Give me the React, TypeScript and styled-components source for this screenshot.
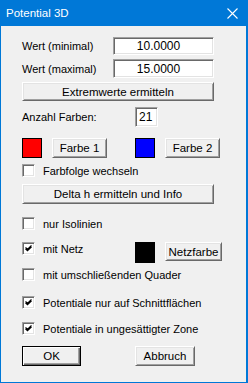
import React from 'react';
import styled, { createGlobalStyle } from 'styled-components';

const GlobalStyle = createGlobalStyle`
  html, body {
    margin: 0;
    padding: 0;
    background: #ffffff;
  }
  body {
    font-family: "Liberation Sans", Arial, sans-serif;
    font-size: 11px;
    color: #000;
  }
`;

const Window = styled.div`
  width: 248px;
  height: 383px;
  box-sizing: border-box;
  background: #f0f0f0;
  border-left: 1px solid #0078d7;
  border-right: 2px solid #0078d7;
  border-bottom: 1px solid #0078d7;
  display: flex;
  flex-direction: column;
`;

const TitleBar = styled.div`
  height: 26px;
  background: #0078d7;
  color: #fff;
  display: flex;
  align-items: center;
  justify-content: space-between;
  padding: 0 10px 0 6px;
  margin: 0 -2px 0 -1px;
  font-size: 11.5px;
`;

const Body = styled.div`
  display: flex;
  flex-direction: column;
  padding: 11px 0 0 21px;
`;

const Row = styled.div<{ $top?: number; $cols?: string; $h?: number }>`
  display: grid;
  grid-template-columns: ${(p) => p.$cols || '113px auto'};
  align-items: center;
  margin-top: ${(p) => p.$top || 0}px;
  height: ${(p) => (p.$h ? `${p.$h}px` : 'auto')};
`;

const Label = styled.span`
  white-space: nowrap;
`;

const Field = styled.div<{ $w: number; $h: number; $align?: string }>`
  box-sizing: border-box;
  width: ${(p) => p.$w}px;
  height: ${(p) => p.$h}px;
  background: #fff;
  border-style: solid;
  border-width: 1px;
  border-color: #a0a0a0 #fff #fff #a0a0a0;
  box-shadow: inset 1px 1px 0 #696969, inset -1px -1px 0 #e3e3e3;
  display: flex;
  align-items: center;
  justify-content: ${(p) => p.$align || 'center'};
  padding: ${(p) => (p.$align ? '0 0 0 3px' : '0 10px 0 0')};
  font-size: 12px;
`;

const Button = styled.div<{ $w: number; $h?: number; $default?: boolean }>`
  box-sizing: border-box;
  width: ${(p) => p.$w}px;
  height: ${(p) => p.$h || 19}px;
  background: #f0f0f0;
  border-style: solid;
  border-width: 1px;
  border-color: ${(p) => (p.$default ? '#000' : '#fff #696969 #696969 #fff')};
  box-shadow: ${(p) =>
    p.$default
      ? 'inset 1px 1px 0 #fff, inset -1px -1px 0 #696969, inset -2px -2px 0 #a0a0a0'
      : 'inset 1px 1px 0 #e3e3e3, inset -1px -1px 0 #a0a0a0'};
  display: flex;
  align-items: center;
  justify-content: center;
  font-size: 11.5px;
  white-space: nowrap;
`;

const Swatch = styled.div<{ $color: string; $h?: number }>`
  box-sizing: border-box;
  width: 20px;
  height: ${(p) => p.$h || 20}px;
  background: ${(p) => p.$color};
  border: 1px solid #000;
`;

const ColorGroup = styled.div`
  display: flex;
  align-items: flex-start;
  gap: 10px;
`;

const CheckRow = styled.div<{ $top: number }>`
  display: flex;
  align-items: center;
  gap: 8px;
  margin-top: ${(p) => p.$top}px;
  height: 13px;
`;

const Box = styled.div`
  box-sizing: border-box;
  width: 13px;
  height: 13px;
  background: #fff;
  border-style: solid;
  border-width: 1px;
  border-color: #a0a0a0 #fff #fff #a0a0a0;
  box-shadow: inset 1px 1px 0 #696969, inset -1px -1px 0 #e3e3e3;
  display: flex;
  align-items: center;
  justify-content: center;
`;

function Check(props: { checked?: boolean; label: string; top: number }) {
  return (
    <CheckRow $top={props.top}>
      <Box>
        {props.checked && (
          <svg width="9" height="9" viewBox="0 0 9 9">
            <path d="M1.5 3.5 L3.5 5.5 L7.5 1.5 M1.5 4.7 L3.5 6.7 L7.5 2.7" stroke="#000" strokeWidth="1.3" fill="none" />
          </svg>
        )}
      </Box>
      <Label>{props.label}</Label>
    </CheckRow>
  );
}

export default function App() {
  return (
    <>
      <GlobalStyle />
      <Window>
        <TitleBar>
          <span>Potential 3D</span>
          <svg width="11" height="11" viewBox="0 0 11 11">
            <path d="M0.5 0.5 L10.5 10.5 M10.5 0.5 L0.5 10.5" stroke="#fff" strokeWidth="1.1" />
          </svg>
        </TitleBar>
        <Body>
          <Row $cols="91px auto">
            <Label>Wert (minimal)</Label>
            <Field $w={101} $h={18}>10.0000</Field>
          </Row>
          <Row $cols="91px auto" $top={4}>
            <Label>Wert (maximal)</Label>
            <Field $w={101} $h={19}>15.0000</Field>
          </Row>
          <Row $top={4} $cols="auto">
            <Button $w={192}>Extremwerte ermitteln</Button>
          </Row>
          <Row $top={6}>
            <Label>Anzahl Farben:</Label>
            <Field $w={23} $h={20} $align="flex-start">21</Field>
          </Row>
          <Row $top={11}>
            <ColorGroup>
              <Swatch $color="#ff0000" />
              <Button $w={55} $h={20}>Farbe 1</Button>
            </ColorGroup>
            <ColorGroup>
              <Swatch $color="#0000ff" />
              <Button $w={55} $h={20}>Farbe 2</Button>
            </ColorGroup>
          </Row>
          <Check top={6} label="Farbfolge wechseln" />
          <Row $top={7} $cols="auto">
            <Button $w={192} $h={20}>Delta h ermitteln und Info</Button>
          </Row>
          <Check top={13} label="nur Isolinien" />
          <Row $top={12} $h={21}>
            <CheckRow $top={0} style={{ alignSelf: 'flex-start' }}>
              <Box>
                <svg width="9" height="9" viewBox="0 0 9 9">
                  <path d="M1.5 3.5 L3.5 5.5 L7.5 1.5 M1.5 4.7 L3.5 6.7 L7.5 2.7" stroke="#000" strokeWidth="1.3" fill="none" />
                </svg>
              </Box>
              <Label>mit Netz</Label>
            </CheckRow>
            <ColorGroup>
              <Swatch $color="#000" $h={21} />
              <Button $w={57} $h={19}>Netzfarbe</Button>
            </ColorGroup>
          </Row>
          <Check top={5} label="mit umschließenden Quader" />
          <Check top={15} checked label="Potentiale nur auf Schnittflächen" />
          <Check top={13} checked label="Potentiale in ungesättigter Zone" />
          <Row $top={11}>
            <Button $w={59} $h={20} $default>OK</Button>
            <Button $w={60} $h={20}>Abbruch</Button>
          </Row>
        </Body>
      </Window>
    </>
  );
}
